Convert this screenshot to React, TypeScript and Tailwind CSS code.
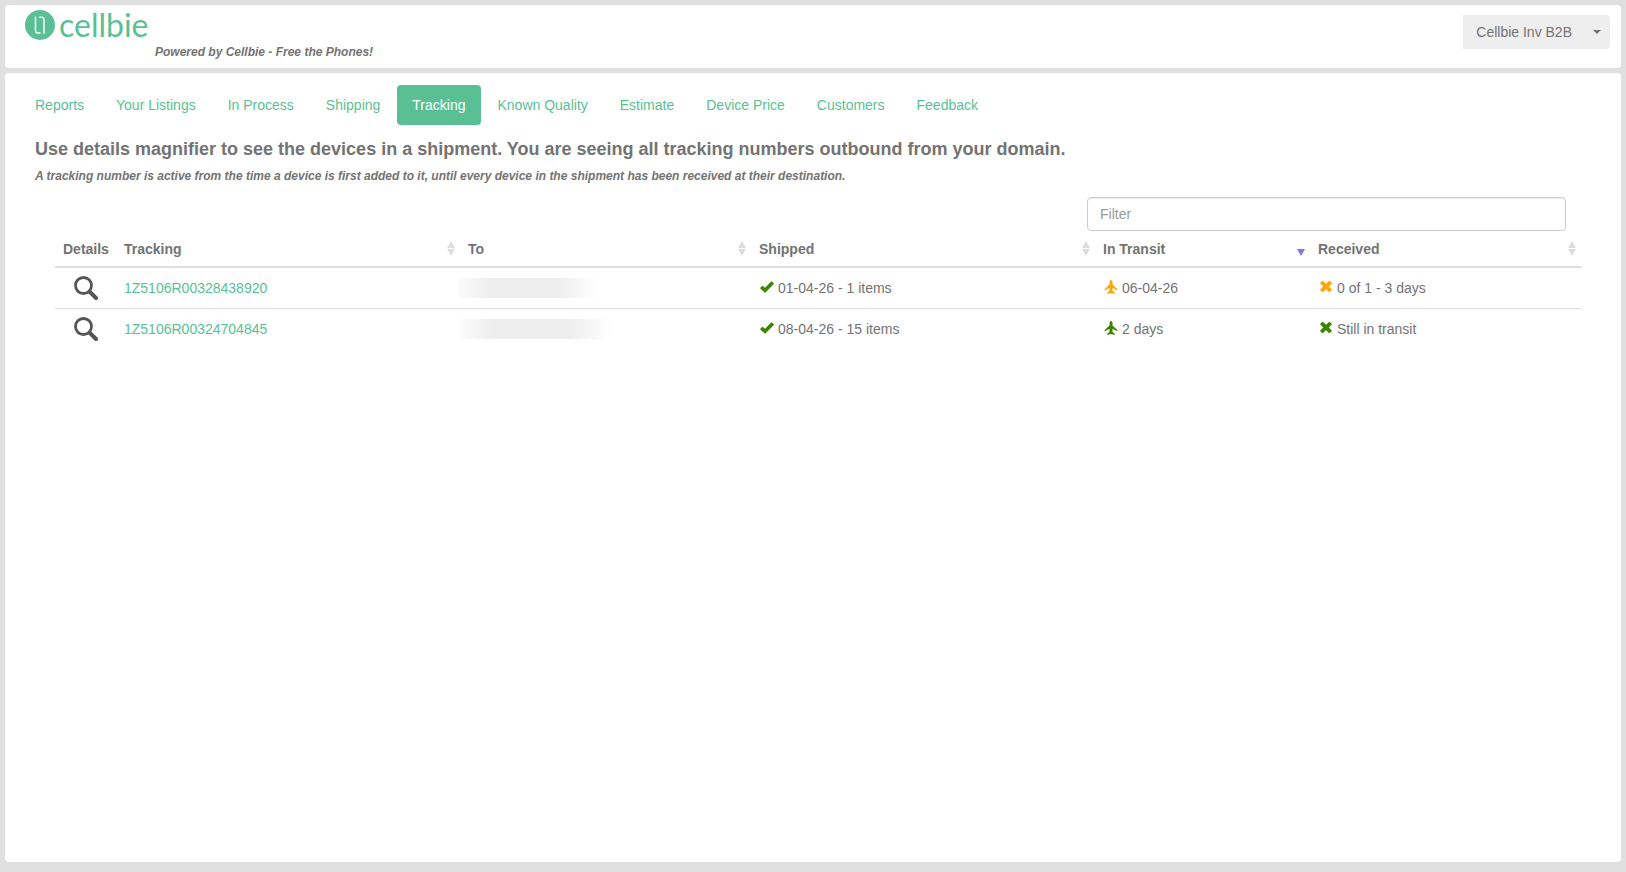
import type { ReactNode } from "react";

type Tone = "late" | "ok";

interface Shipment {
  tracking: string;
  shipped: string;
  inTransit: string;
  received: string;
  tone: Tone;
  toWidth: string;
}

const tabs = [
  "Reports",
  "Your Listings",
  "In Process",
  "Shipping",
  "Tracking",
  "Known Quality",
  "Estimate",
  "Device Price",
  "Customers",
  "Feedback",
];

const columns = [
  { label: "Tracking", width: "w-[344px]" },
  { label: "To", width: "w-[291px]" },
  { label: "Shipped", width: "w-[344px]" },
  { label: "In Transit", width: "w-[215px]", sorted: true },
  { label: "Received", width: "w-[271px]" },
];

const shipments: Shipment[] = [
  {
    tracking: "1Z5106R00328438920",
    shipped: "01-04-26 - 1 items",
    inTransit: "06-04-26",
    received: "0 of 1 - 3 days",
    tone: "late",
    toWidth: "w-[140px]",
  },
  {
    tracking: "1Z5106R00324704845",
    shipped: "08-04-26 - 15 items",
    inTransit: "2 days",
    received: "Still in transit",
    tone: "ok",
    toWidth: "w-[154px]",
  },
];

const toneClasses = {
  late: "text-[#ffa500]",
  ok: "text-[#3c8500]",
};

function Logo() {
  return (
    <a href="#" className="flex items-center gap-1 text-[#5abf95]">
      <svg viewBox="0 0 30 30" className="size-[30px]" aria-hidden="true">
        <circle cx="15" cy="15" r="15" fill="currentColor" />
        <g fill="none" stroke="#fff" strokeWidth="1.4" strokeLinecap="round" strokeLinejoin="round">
          <path d="M10.5 7.2v13.3a2.5 2.5 0 0 0 2.5 2.5h2" />
          <path d="M14.5 7.2h2a2.5 2.5 0 0 1 2.5 2.5v13.6" />
        </g>
      </svg>
      <span className="font-[Lato,sans-serif] text-[32px] leading-[30px]">cellbie</span>
    </a>
  );
}

function SearchIcon() {
  return (
    <svg viewBox="0 0 24 24" className="size-6" aria-hidden="true">
      <circle cx="9.5" cy="9.5" r="8" fill="none" stroke="#555" strokeWidth="2.8" />
      <path d="M15.8 15.8l6.2 6.2" stroke="#555" strokeWidth="4" strokeLinecap="round" />
    </svg>
  );
}

function CheckIcon() {
  return (
    <svg viewBox="0 0 14 14" className="size-3.5" fill="currentColor" aria-hidden="true">
      <path d="M11.8 1.4l2 1.9q.3.3 0 .6L5.5 12.6q-.4.4-.8 0L.3 8.4q-.3-.3 0-.6l1.9-1.9q.3-.3.7 0L5 7.7l6.2-6.3q.3-.3.6 0z" />
    </svg>
  );
}

function PlaneIcon() {
  return (
    <svg viewBox="0 0 14 14" className="size-3.5" fill="currentColor" aria-hidden="true">
      <path d="M7 0c1 0 1.5 1 1.5 2.4v2.2l4.5 4.2c.3.3.4.5.4.9v.7L8.5 7.8v3l1.9 1.7c.2.2.3.4.3.7v.7L7.4 12.9 7 14l-.4-1.100-3.300 1v-.7c0-.3.1-.5.3-.7l1.900-1.700v-3L.6 10.400v-.7c0-.4.1-.6.4-.9l4.500-4.200V2.400C5.500 1 6 0 7 0z" />
    </svg>
  );
}

function RemoveIcon() {
  return (
    <svg viewBox="0 0 14 14" className="size-3.5" fill="currentColor" aria-hidden="true">
      <path d="M4 .9L7 3.8 10 .9q.4-.4.8 0l1.900 1.900q.4.4 0 .8L9.800 6.500l2.900 2.900q.4.4 0 .8l-1.900 1.900q-.4.4-.8 0L7 9.200 4 12.100q-.4.4-.8 0L1.300 10.200q-.4-.4 0-.8L4.200 6.500 1.300 3.600q-.4-.4 0-.8L3.200.9q.4-.4.8 0z" />
    </svg>
  );
}

function SortArrows({ sorted }: { sorted?: boolean }) {
  return (
    <svg viewBox="0 0 8 15" className="h-[15px] w-2" aria-hidden="true">
      {!sorted && <path d="M4 0l4 7H0z" fill="#ddd" />}
      <path d="M0 8h8l-4 7z" fill={sorted ? "#7b7be0" : "#ddd"} />
    </svg>
  );
}

function StatusCell({ icon, tone, children }: { icon: ReactNode; tone: Tone; children: ReactNode }) {
  return (
    <td className="pr-2 pl-[9px]">
      <div className="flex items-center gap-1">
        <span className={`${toneClasses[tone]} pb-0.5`}>{icon}</span>
        {children}
      </div>
    </td>
  );
}

export default function App() {
  return (
    <div className="flex min-h-screen flex-col gap-[5px] bg-[#e0e0e0] px-[5px] pt-[5px] pb-2.5 font-['Liberation_Sans',Arial,sans-serif] text-sm leading-5 text-[#737373]">
      <header className="flex items-start justify-between rounded-[4px] bg-white pt-[5px] pr-[11px] pb-2 pl-5">
        <div>
          <Logo />
          <p className="pt-1 pl-[130px] text-xs leading-4 font-bold italic">Powered by Cellbie - Free the Phones!</p>
        </div>
        <button
          type="button"
          className="mt-[5px] flex h-[34px] items-center gap-[21px] rounded-r-[4px] bg-[#eee] pr-[9px] pl-[13px]"
        >
          Cellbie Inv B2B
          <svg viewBox="0 0 8 4" className="h-1 w-2" fill="currentColor" aria-hidden="true">
            <path d="M0 0h8L4 4z" />
          </svg>
        </button>
      </header>

      <main className="grow rounded-[4px] bg-white pt-3 pr-10 pl-[15px]">
        <nav className="flex gap-0.5">
          {tabs.map((tab) => (
            <a
              key={tab}
              href="#"
              className={
                tab === "Tracking"
                  ? "rounded-[4px] bg-[#5abf95] px-[15px] py-2.5 text-white"
                  : "rounded-[4px] px-[15px] py-2.5 text-[#5abf95]"
              }
            >
              {tab}
            </a>
          ))}
        </nav>

        <h4 className="pt-3.5 pl-[15px] text-lg leading-5 font-bold">
          Use details magnifier to see the devices in a shipment. You are seeing all tracking numbers outbound from your
          domain.
        </h4>
        <p className="pt-[7px] pl-[15px] text-xs leading-5 font-bold italic">
          A tracking number is active from the time a device is first added to it, until every device in the shipment
          has been received at their destination.
        </p>

        <div className="flex justify-end pt-[11px] pr-[15px] pl-[35px]">
          <input
            type="text"
            aria-label="Filter"
            placeholder="Filter"
            className="h-[34px] w-[479px] max-w-full rounded-[4px] border border-[#ccc] px-3 shadow-[inset_0_1px_1px_rgba(0,0,0,0.075)] placeholder:text-[#999]"
          />
        </div>

        <div className="pl-[35px]">
          <table className="w-full table-fixed border-collapse text-left">
            <thead>
              <tr className="h-9 border-b-2 border-[#ddd]">
                <th className="w-[61px] pl-2">Details</th>
                {columns.map((column) => (
                  <th key={column.label} className={`${column.width} pr-[5px] pl-2`}>
                    <div className="flex items-center justify-between">
                      {column.label}
                      <SortArrows sorted={column.sorted} />
                    </div>
                  </th>
                ))}
              </tr>
            </thead>
            <tbody>
              {shipments.map((shipment) => (
                <tr key={shipment.tracking} className="h-[41px] border-b border-[#ddd] last:border-b-0">
                  <td>
                    <button type="button" aria-label="Details" className="mx-auto block">
                      <SearchIcon />
                    </button>
                  </td>
                  <td className="px-2">
                    <a href="#" className="text-[#5abf95]">
                      {shipment.tracking}
                    </a>
                  </td>
                  <td>
                    <div
                      className={`${shipment.toWidth} -ml-0.5 h-5 bg-[linear-gradient(to_right,#fcfcfc,#eee_22%,#eee_72%,#fff)]`}
                    />
                  </td>
                  <StatusCell icon={<CheckIcon />} tone="ok">
                    {shipment.shipped}
                  </StatusCell>
                  <StatusCell icon={<PlaneIcon />} tone={shipment.tone}>
                    {shipment.inTransit}
                  </StatusCell>
                  <StatusCell icon={<RemoveIcon />} tone={shipment.tone}>
                    {shipment.received}
                  </StatusCell>
                </tr>
              ))}
            </tbody>
          </table>
        </div>
      </main>
    </div>
  );
}
